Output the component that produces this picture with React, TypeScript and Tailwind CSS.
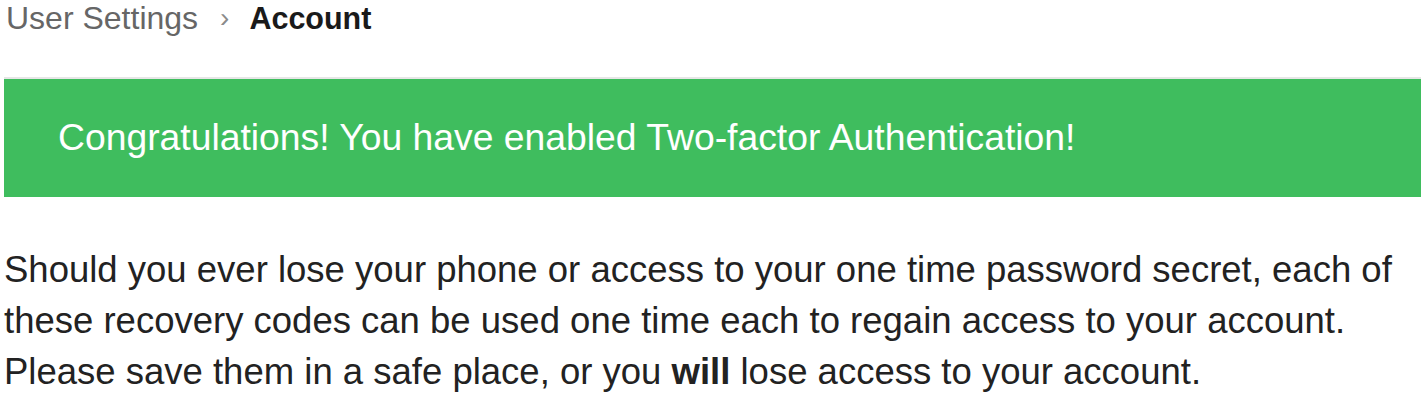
export default function App() {
  return (
    <div className="w-[1425px] h-[416px] bg-white overflow-hidden" style={{ fontFamily: '"Liberation Sans", Arial, sans-serif' }}>
      <div className="flex items-center h-[36px] pl-[6px] text-[32px] leading-none">
        <span className="text-[#666666]">User Settings</span>
        <span className="text-[#8a8a8a] ml-[22px] mr-[20px] text-[28px]">›</span>
        <span className="text-[#1a1a1a] font-bold text-[30.5px]">Account</span>
      </div>
      <div className="mt-[41px] mx-[4px] border-t-[2px] border-[#e6e6e6] bg-[#3fbd5e] h-[120px] flex items-center pl-[54px]">
        <span className="text-white text-[37.3px] leading-none">Congratulations! You have enabled Two-factor Authentication!</span>
      </div>
      <p className="mt-[47px] pl-[4px] text-[36.5px] leading-[51px] text-[#222222] whitespace-nowrap">
        Should you ever lose your phone or access to your one time password secret, each of
        <br />
        these recovery codes can be used one time each to regain access to your account.
        <br />
        Please save them in a safe place, or you <b>will</b> lose access to your account.
      </p>
    </div>
  );
}
